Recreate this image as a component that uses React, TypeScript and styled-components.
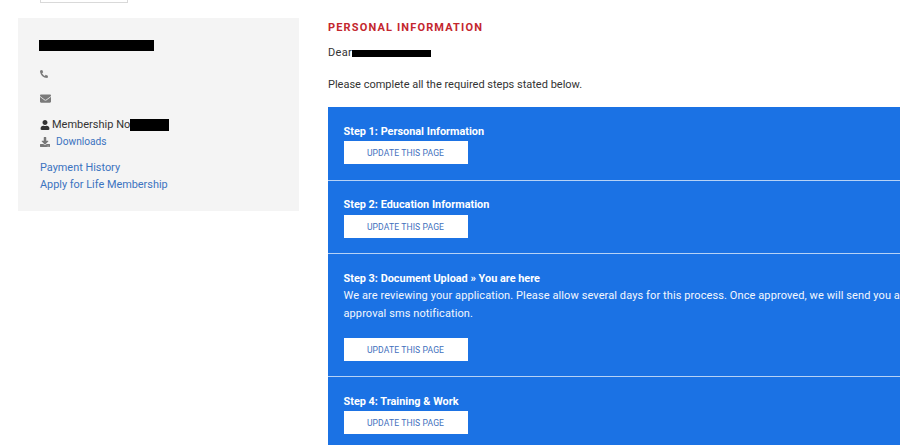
import React from "react";
import styled, { createGlobalStyle } from "styled-components";
import { FaPhone, FaEnvelope, FaUser, FaDownload } from "react-icons/fa";

const Global = createGlobalStyle`
  html, body { margin: 0; padding: 0; background: #fff; overflow: hidden; }
  body { font-family: Roboto, "Liberation Sans", sans-serif; color: #333; }
`;

const Page = styled.div`
  display: flex;
  width: 900px;
  height: 445px;
  overflow: hidden;
  align-items: flex-start;
`;

const SideColumn = styled.aside`
  width: 281px;
  margin-left: 18px;
  flex: none;
`;

const PhotoEdge = styled.div`
  width: 86px;
  height: 2px;
  margin-left: 22px;
  margin-bottom: 15px;
  border: 1px solid #d9d9d9;
  border-top: 0;
`;

const Card = styled.div`
  height: 193px;
  box-sizing: border-box;
  background: #f4f4f4;
  padding: 22px 22px 0 21px;
`;

const Redacted = styled.span<{ $w: number; $h: number }>`
  display: inline-block;
  width: ${(p) => p.$w}px;
  height: ${(p) => p.$h}px;
  background: #000;
`;

const NameBar = styled.div`
  height: 11px;
  line-height: 0;
  margin-bottom: 10px;
`;

const IconRow = styled.div`
  height: 25px;
  display: flex;
  align-items: center;
  color: #7a7a7a;
  font-size: 11px;
  padding-left: 1px;
`;

const MemberRow = styled.div`
  display: flex;
  align-items: center;
  height: 17px;
  margin-top: 5px;
  font-size: 11px;
  color: #333;
  padding-left: 1px;
  svg { margin-right: 2px; font-size: 10px; }
`;

const DownloadRow = styled.div`
  display: flex;
  align-items: center;
  height: 17px;
  font-size: 10.2px;
  padding-left: 1px;
  margin-bottom: 8.5px;
  svg { color: #777; font-size: 10px; margin-right: 6px; }
`;

const SideLink = styled.a`
  color: #3b73c0;
  text-decoration: none;
`;

const LinkLine = styled.div`
  height: 17.5px;
  line-height: 17.5px;
  padding-left: 1px;
  font-size: 10.9px;
`;

const Main = styled.main`
  margin-left: 29px;
  flex: none;
  width: 596px;
`;

const Heading = styled.h2`
  margin: 21px 0 0;
  color: #c4262e;
  font-size: 11px;
  line-height: 13px;
  font-weight: 700;
  letter-spacing: 1.15px;
  text-transform: uppercase;
`;

const Dear = styled.p`
  margin: 12px 0 0;
  font-size: 11px;
  line-height: 14px;
  color: #333;
  letter-spacing: 0.3px;
  display: flex;
  align-items: center;
`;

const Intro = styled.p`
  margin: 18px 0 0;
  font-size: 11px;
  line-height: 14px;
  color: #333;
`;

const Steps = styled.div`
  margin-top: 15px;
  background: #1b72e4;
`;

const UpdateButton = styled.a`
  display: block;
  width: 124px;
  height: 23px;
  margin-top: 1px;
  background: #fff;
  color: #3f70bd;
  font-size: 8.6px;
  line-height: 24px;
  text-align: center;
  text-transform: uppercase;
  letter-spacing: 0.1px;
`;

const Step = styled.section<{ $compact?: boolean }>`
  padding: ${(p) => (p.$compact ? 16 : 17)}px 15px 15px 15.5px;
  color: #fff;
  & + & { border-top: 1px solid #b6d2f6; }
  &:first-child { padding-bottom: 16px; }
  ${UpdateButton} { margin-top: ${(p) => (p.$compact ? 2 : 1)}px; }
`;

const StepTitle = styled.div`
  font-size: 10.9px;
  line-height: 16px;
  font-weight: 700;
`;

const StepText = styled.p`
  margin: 0 0 15px;
  font-size: 11px;
  line-height: 18px;
  letter-spacing: 0.1px;
  color: #f3f7fe;
`;

export default function App() {
  return (
    <>
      <Global />
      <Page>
        <SideColumn>
          <PhotoEdge />
          <Card>
            <NameBar>
              <Redacted $w={115} $h={11} />
            </NameBar>
            <IconRow><FaPhone style={{ transform: "scaleX(-1)" }} size={8} /></IconRow>
            <IconRow><FaEnvelope /></IconRow>
            <MemberRow>
              <FaUser />
              Membership No
              <Redacted $w={39} $h={12} />
            </MemberRow>
            <DownloadRow>
              <FaDownload />
              <SideLink href="#">Downloads</SideLink>
            </DownloadRow>
            <LinkLine><SideLink href="#">Payment History</SideLink></LinkLine>
            <LinkLine><SideLink href="#">Apply for Life Membership</SideLink></LinkLine>
          </Card>
        </SideColumn>
        <Main>
          <Heading>Personal Information</Heading>
          <Dear>
            Dear
            <Redacted $w={79} $h={7} />
          </Dear>
          <Intro>Please complete all the required steps stated below.</Intro>
          <Steps>
            <Step>
              <StepTitle>Step 1: Personal Information</StepTitle>
              <UpdateButton>Update this page</UpdateButton>
            </Step>
            <Step $compact>
              <StepTitle>Step 2: Education Information</StepTitle>
              <UpdateButton>Update this page</UpdateButton>
            </Step>
            <Step>
              <StepTitle>Step 3: Document Upload » You are here</StepTitle>
              <StepText>
                We are reviewing your application. Please allow several days for this process. Once approved, we will send you an approval sms notification.
              </StepText>
              <UpdateButton>Update this page</UpdateButton>
            </Step>
            <Step>
              <StepTitle>Step 4: Training &amp; Work</StepTitle>
              <UpdateButton>Update this page</UpdateButton>
            </Step>
          </Steps>
        </Main>
      </Page>
    </>
  );
}
